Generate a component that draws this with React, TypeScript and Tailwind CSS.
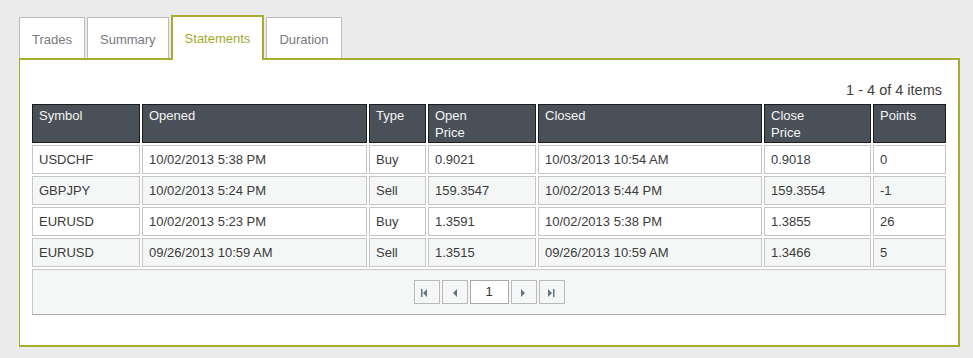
import React from "react";

const OLIVE = "border-[#a9ad2d]";

type Row = string[];
const cols = ["Symbol", "Opened", "Type", "Open\nPrice", "Closed", "Close\nPrice", "Points"];
const rows: Row[] = [
  ["USDCHF", "10/02/2013 5:38 PM", "Buy", "0.9021", "10/03/2013 10:54 AM", "0.9018", "0"],
  ["GBPJPY", "10/02/2013 5:24 PM", "Sell", "159.3547", "10/02/2013 5:44 PM", "159.3554", "-1"],
  ["EURUSD", "10/02/2013 5:23 PM", "Buy", "1.3591", "10/02/2013 5:38 PM", "1.3855", "26"],
  ["EURUSD", "09/26/2013 10:59 AM", "Sell", "1.3515", "09/26/2013 10:59 AM", "1.3466", "5"],
];

function Tab({ label, active }: { label: string; active?: boolean }) {
  if (active) {
    return (
      <div className={`relative z-10 h-[45px] border-x-2 border-t-2 ${OLIVE} bg-white px-[12px] pt-[13px] text-[13px] leading-[17px] text-[#a5aa2b]`}>
        {label}
      </div>
    );
  }
  return (
    <div className="mt-[2px] h-[41px] border-x border-t border-[#bcbcbc] bg-white px-[12px] pt-[13px] text-[13px] leading-[17px] text-[#777a80]">
      {label}
    </div>
  );
}

function PagerBtn({ children }: { children: React.ReactNode }) {
  return (
    <div className="flex h-[24px] w-[26px] items-center justify-center border border-[#b9b9b9] bg-[#f5f7f6]">
      <svg width="24" height="22" viewBox="0 0 24 22" fill="#66767e">
        {children}
      </svg>
    </div>
  );
}

export default function App() {
  return (
    <div
      className="h-[358px] w-full bg-[#ebebeb] pl-[19px] pt-[15px]"
      style={{ fontFamily: '"Liberation Sans", Arial, sans-serif' }}
    >
      <div className="flex h-[43px] items-start gap-[2px]">
        <Tab label="Trades" />
        <Tab label="Summary" />
        <Tab label="Statements" active />
        <Tab label="Duration" />
      </div>
      <div className={`w-[941px] border-b-2 border-l border-r-2 border-t-2 ${OLIVE} bg-white pb-[30px] pl-[12px] pt-[22px]`}>
        <div className="mb-[5px] w-[914px] pr-[4px] text-right text-[14.5px] leading-[17px] text-[#404040]">
          1 - 4 of 4 items
        </div>
        <div className="grid w-[914px] grid-cols-[108px_225px_57px_108px_224px_107px_73px] gap-[2px]">
          {cols.map((c) => (
            <div
              key={c}
              className="h-[39px] whitespace-pre-line border border-[#1d1d1d] bg-[#4a5058] px-[6px] pt-[2px] text-[13px] leading-[17px] text-[#f4f4f4]"
            >
              {c}
            </div>
          ))}
          {rows.map((r, i) =>
            r.map((v, j) => (
              <div
                key={`${i}-${j}`}
                className={`flex h-[29px] items-center border border-[#c6c6c6] px-[6px] text-[13px] leading-[17px] text-[#3b3b3b] ${
                  i % 2 === 1 ? "bg-[#f5f7f6]" : "bg-white"
                }`}
              >
                {v}
              </div>
            ))
          )}
          <div className="col-span-7 flex h-[46px] items-center justify-center gap-[2px] border border-[#c8c8c8] border-b-[#a9a9a9] bg-[#f5f7f6]">
            <PagerBtn>
              <rect x="6" y="8" width="1.5" height="8" />
              <polygon points="8,12 12,8 12,16" />
            </PagerBtn>
            <PagerBtn>
              <polygon points="10,12 14,8 14,16" />
            </PagerBtn>
            <div className="flex h-[24px] w-[39px] items-center justify-center border border-[#a9a9a9] bg-white text-[13px] text-[#333]">
              1
            </div>
            <PagerBtn>
              <polygon points="9,8 13,12 9,16" />
            </PagerBtn>
            <PagerBtn>
              <polygon points="8,8 12,12 8,16" />
              <rect x="13" y="8" width="1.5" height="8" />
            </PagerBtn>
          </div>
        </div>
      </div>
    </div>
  );
}
